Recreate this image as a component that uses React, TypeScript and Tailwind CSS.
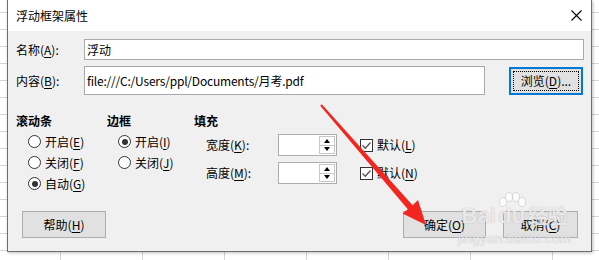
import type { ReactNode } from "react";

function Key({ k }: { k: string }) {
  return <span className="underline underline-offset-2">{k}</span>;
}

function Radio({ checked, children }: { checked?: boolean; children: ReactNode }) {
  return (
    <div className="flex h-[21px] items-center">
      <span className="flex h-[13px] w-[13px] items-center justify-center rounded-full border border-[#333] bg-white">
        {checked && <span className="h-[6px] w-[6px] rounded-full bg-[#333]" />}
      </span>
      <span className="ml-[4px]">{children}</span>
    </div>
  );
}

function Check({ children }: { children: ReactNode }) {
  return (
    <div className="ml-[23px] flex items-center">
      <span className="flex h-[13px] w-[13px] items-center justify-center border border-[#333] bg-white">
        <svg width="11" height="11" viewBox="0 0 11 11">
          <path d="M1.5 5.5 L4.3 8.3 L9.5 2.5" fill="none" stroke="#555" strokeWidth="1.3" />
        </svg>
      </span>
      <span className="ml-[4px]">{children}</span>
    </div>
  );
}

function Spin() {
  return (
    <div className="flex h-[22px] w-[59px] border border-[#adadad] bg-white">
      <div className="flex-1" />
      <div className="my-[1px] mr-[1px] flex w-[16px] flex-col border border-[#c8c8c8]">
        <div className="flex flex-1 items-center justify-center border-b border-[#c8c8c8]">
          <span className="h-0 w-0 border-x-[3.5px] border-b-[4px] border-x-transparent border-b-black" />
        </div>
        <div className="flex flex-1 items-center justify-center">
          <span className="h-0 w-0 border-x-[3.5px] border-t-[4px] border-x-transparent border-t-black" />
        </div>
      </div>
    </div>
  );
}

function Btn({ w, children }: { w: string; children: ReactNode }) {
  return (
    <div className={`flex h-[27px] items-center justify-center border border-[#adadad] bg-[#e1e1e1] ${w}`}>
      {children}
    </div>
  );
}

export default function App() {
  return (
    <div className="relative h-[260px] w-[599px] overflow-hidden bg-white bg-[repeating-linear-gradient(to_bottom,transparent_0_12px,#d4d4d4_12px_13px,transparent_13px_17px),repeating-linear-gradient(to_right,transparent_0_60px,#d4d4d4_60px_61px,transparent_61px_82px)] font-['Noto_Sans_CJK_SC','Microsoft_YaHei',sans-serif] text-[12px] leading-[16px] text-black">
      <div className="ml-[7px] flex h-[252px] w-[585px] flex-col border-x border-b border-[#6e6e6e] bg-[#f0f0f0] shadow-[1px_1px_3px_rgba(0,0,0,0.25)]">
        {/* title bar */}
        <div className="flex h-[31px] items-center justify-between bg-white pl-2 pr-[9px]">
          <span>浮动框架属性</span>
          <svg width="11" height="11" viewBox="0 0 11 11">
            <path d="M0.5 0.5 L10.5 10.5 M10.5 0.5 L0.5 10.5" stroke="#000" strokeWidth="1.1" />
          </svg>
        </div>

        <div className="mt-2 flex items-center">
          <span className="w-[76px] pl-2">
            名称(<Key k="A" />):
          </span>
          <div className="flex h-[21px] w-[500px] items-center border border-[#a9a9a9] bg-white pl-[2px]">浮动</div>
        </div>

        <div className="mt-[6px] flex items-center">
          <span className="w-[76px] pl-2">
            内容(<Key k="B" />):
          </span>
          <div className="flex h-[29px] w-[401px] items-center border border-[#a9a9a9] bg-white pl-[2px] tracking-[-0.2px]">
            file:///C:/Users/ppl/Documents/月考.pdf
          </div>
          <div className="ml-[24px] flex h-[28px] w-[74px] items-center justify-center border-2 border-[#0078d7] bg-[#e1e1e1] p-[2px]">
            <div className="flex h-full w-full items-center justify-center border border-dotted border-black">
              浏览(<Key k="D" />)...
            </div>
          </div>
        </div>

        {/* options */}
        <div className="mt-[18px] flex">
          <div className="w-[99px] pl-2">
            <div className="font-bold">滚动条</div>
            <div className="ml-3 mt-[2px]">
              <Radio>
                开启(<Key k="E" />)
              </Radio>
              <Radio>
                关闭(<Key k="F" />)
              </Radio>
              <Radio checked>
                自动(<Key k="G" />)
              </Radio>
            </div>
          </div>
          <div className="w-[87px]">
            <div className="font-bold">边框</div>
            <div className="ml-[11px] mt-[2px]">
              <Radio checked>
                开启(<Key k="I" />)
              </Radio>
              <Radio>
                关闭(<Key k="J" />)
              </Radio>
            </div>
          </div>
          <div>
            <div className="font-bold">填充</div>
            <div className="ml-3 mt-[5px] flex flex-col gap-[6px]">
              <div className="flex items-center">
                <span className="w-[72px]">
                  宽度(<Key k="K" />):
                </span>
                <Spin />
                <Check>
                  默认(<Key k="L" />)
                </Check>
              </div>
              <div className="flex items-center">
                <span className="w-[72px]">
                  高度(<Key k="M" />):
                </span>
                <Spin />
                <Check>
                  默认(<Key k="N" />)
                </Check>
              </div>
            </div>
          </div>
        </div>

        <div className="mt-[17px] flex pl-[14px] pr-[13px]">
          <Btn w="w-[84px]">
            帮助(<Key k="H" />)
          </Btn>
          <div className="flex-1" />
          <Btn w="w-[83px]">
            确定(<Key k="O" />)
          </Btn>
          <div className="ml-[17px]">
            <Btn w="w-[75px]">
              取消(<Key k="C" />)
            </Btn>
          </div>
        </div>
      </div>

      {/* watermark */}
      <div className="pointer-events-none absolute left-[458px] top-[192px] flex flex-col items-center text-white/75 [text-shadow:0_0_1px_rgba(120,120,120,0.6)]">
        <div className="flex items-end font-['Liberation_Sans',sans-serif] text-[22px] font-bold leading-[24px]">
          <span>Bai</span>
          <span className="relative mx-[1px] flex flex-col items-center">
            <svg width="30" height="16" viewBox="0 0 30 16" className="opacity-80">
              <ellipse cx="6" cy="10" rx="3.5" ry="4.5" fill="white" stroke="#bbb" strokeWidth="0.6" />
              <ellipse cx="12" cy="5" rx="3.5" ry="4.5" fill="white" stroke="#bbb" strokeWidth="0.6" />
              <ellipse cx="19" cy="5" rx="3.5" ry="4.5" fill="white" stroke="#bbb" strokeWidth="0.6" />
              <ellipse cx="25" cy="10" rx="3.5" ry="4.5" fill="white" stroke="#bbb" strokeWidth="0.6" />
            </svg>
            <span className="-mt-[4px]">du</span>
          </span>
          <span className="font-['Noto_Sans_CJK_SC',sans-serif] text-[20px]">经验</span>
        </div>
        <div className="mt-[4px] font-['Liberation_Sans',sans-serif] text-[13px] leading-[14px] tracking-[0.5px]">
          jingyan.baidu.com
        </div>
      </div>

      {/* red arrow annotation */}
      <svg className="pointer-events-none absolute inset-0" width="599" height="260" viewBox="0 0 599 260">
        <polygon
          points="321.8,104.3 412.6,205.2 418,200 426,225 402.5,213.5 407.8,209.2 320.2,105.7"
          fill="#f2261e"
        />
      </svg>
    </div>
  );
}
